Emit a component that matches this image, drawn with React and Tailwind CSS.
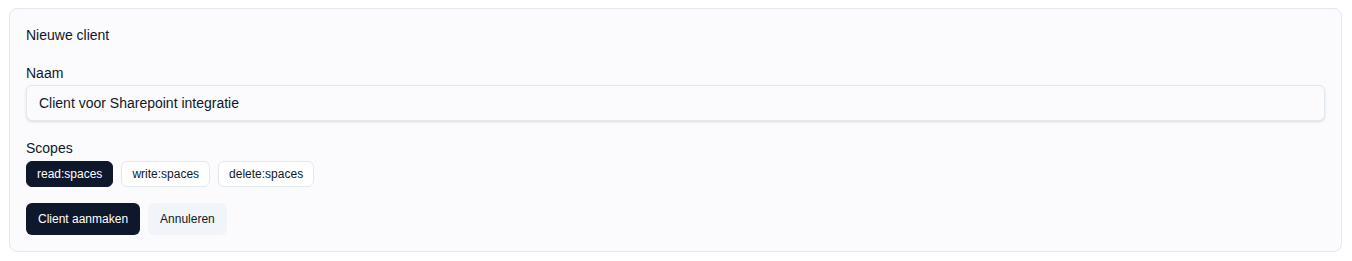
export default function App() {
  const scopes = [
    { name: "read:spaces", active: true },
    { name: "write:spaces", active: false },
    { name: "delete:spaces", active: false },
  ];
  return (
    <div className="p-2 pl-[9px] pr-[10px] bg-white" style={{ fontFamily: '"Liberation Sans", Arial, sans-serif' }}>
      <div className="rounded-lg border border-[#e2e8f0] bg-[#fbfbfe] px-4 pt-4 pb-4 text-[#0f172a]">
        <div className="text-sm leading-5 mb-[18px]">Nieuwe client</div>
        <div className="text-sm leading-5 mb-0.5">Naam</div>
        <div className="h-9 rounded-md border border-[#e2e8f0] bg-[#fbfbfe] shadow-sm flex items-center px-3 text-sm mb-[17px]">
          Client voor Sharepoint integratie
        </div>
        <div className="text-sm leading-5 mb-[3px]">Scopes</div>
        <div className="flex gap-2 mb-4">
          {scopes.map((s) => (
            <div
              key={s.name}
              className={
                s.active
                  ? "h-[26px] px-2.5 flex items-center rounded-md border border-[#0f172a] bg-[#0f172a] text-white text-xs"
                  : "h-[26px] px-2.5 flex items-center rounded-md border border-[#e2e8f0] bg-white text-[#0f172a] text-xs"
              }
            >
              {s.name}
            </div>
          ))}
        </div>
        <div className="flex gap-2">
          <button className="h-8 px-3 rounded-md bg-[#0f172a] text-white text-xs">Client aanmaken</button>
          <button className="h-8 px-3 rounded-md bg-[#f1f5f9] text-[#0f172a] text-xs">Annuleren</button>
        </div>
      </div>
    </div>
  );
}
